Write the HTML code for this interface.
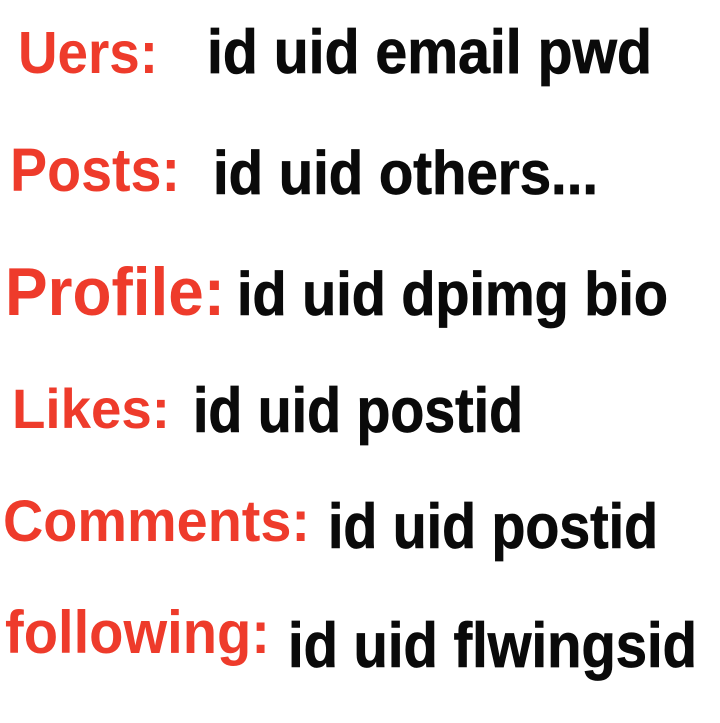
<!DOCTYPE html>
<html><head><style>html,body{margin:0;padding:0;background:#fff;}svg{display:block}</style></head>
<body>
<svg width="720" height="723" viewBox="0 0 720 723" xmlns="http://www.w3.org/2000/svg" font-family="Liberation Sans, Arial, sans-serif" font-weight="bold">
<g fill="#ee3b2b">
<text x="18" y="73" font-size="59" textLength="140" lengthAdjust="spacingAndGlyphs">Uers:</text>
<text x="10" y="191" font-size="61" textLength="170" lengthAdjust="spacingAndGlyphs">Posts:</text>
<text x="5" y="315" font-size="68" textLength="220" lengthAdjust="spacingAndGlyphs">Profile:</text>
<text x="12" y="428" font-size="56" textLength="158" lengthAdjust="spacingAndGlyphs">Likes:</text>
<text x="3" y="541" font-size="58" textLength="307" lengthAdjust="spacingAndGlyphs">Comments:</text>
<text x="5" y="653" font-size="60" textLength="265" lengthAdjust="spacingAndGlyphs">following:</text>
</g>
<g fill="#0a0a0a" stroke="#0a0a0a" stroke-width="0.8">
<text x="207" y="73" font-size="62" textLength="445" lengthAdjust="spacingAndGlyphs">id uid email pwd</text>
<text x="213" y="194" font-size="61" textLength="385" lengthAdjust="spacingAndGlyphs">id uid others...</text>
<text x="237" y="315" font-size="61" textLength="431" lengthAdjust="spacingAndGlyphs">id uid dpimg bio</text>
<text x="193" y="432" font-size="63" textLength="330" lengthAdjust="spacingAndGlyphs">id uid postid</text>
<text x="328" y="548" font-size="63" textLength="330" lengthAdjust="spacingAndGlyphs">id uid postid</text>
<text x="288" y="667" font-size="63" textLength="409" lengthAdjust="spacingAndGlyphs">id uid flwingsid</text>
</g>
</svg>
</body></html>
